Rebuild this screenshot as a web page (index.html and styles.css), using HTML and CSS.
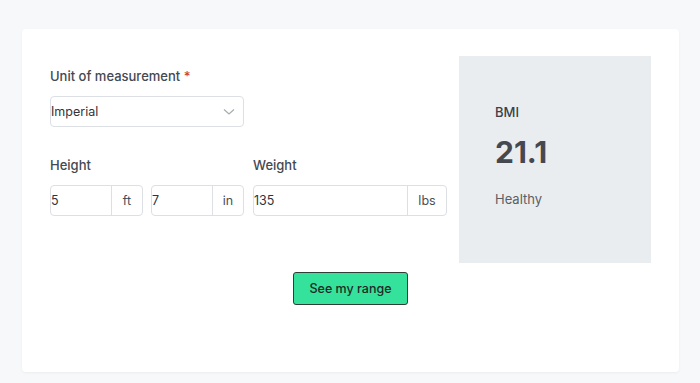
FILE: index.html
```html
<!DOCTYPE html>
<html>
<head>
    <meta charset="UTF-8">
    <meta name="viewport" content="width=device-width, initial-scale=1.0">
    <title>BMI Calculator</title>
    <link rel="stylesheet" href="styles.css">
</head>
<body>
    <div class="card">
        <div class="columns">
            <form class="bmi-form">
                <label class="field-label" for="unit">Unit of measurement <span class="req">*</span></label>
                <div class="select">
                    <span>Imperial</span>
                    <svg width="12" height="8" viewBox="0 0 12 8"><path d="M1 1.5 L6 6 L11 1.5" fill="none" stroke="#a9adb3" stroke-width="1.3"/></svg>
                </div>

                <div class="measure-row">
                    <div class="measure">
                        <div class="field-label">Height</div>
                        <div class="pair">
                            <div class="group"><span class="value">5</span><span class="addon">ft</span></div>
                            <div class="group"><span class="value">7</span><span class="addon">in</span></div>
                        </div>
                    </div>
                    <div class="measure">
                        <div class="field-label">Weight</div>
                        <div class="group"><span class="value">135</span><span class="addon addon-wide">lbs</span></div>
                    </div>
                </div>
            </form>

            <div class="result">
                <div class="result-label">BMI</div>
                <div class="result-value">21.1</div>
                <div class="result-status">Healthy</div>
            </div>
        </div>

        <div class="actions">
            <button type="button">See my range</button>
        </div>
    </div>
</body>
</html>
```

FILE: styles.css
```css
body {
    margin: 0;
    padding: 29px 21px 11px 22px;
    background-color: #f7f8fa;
    font-family: Inter, "Noto Sans", sans-serif;
    color: #3d4350;
}

.card {
    height: 343px;
    box-sizing: border-box;
    padding: 27px 28px 0 28px;
    background-color: #ffffff;
    border-radius: 4px;
    box-shadow: 0 1px 3px rgba(0, 0, 0, 0.05);
}

.columns {
    display: flex;
    gap: 12px;
}

.bmi-form {
    width: 397px;
    padding-top: 11px;
}

.field-label {
    display: block;
    font-size: 13px;
    line-height: 18px;
    font-weight: 500;
    color: #434851;
    margin-bottom: 11px;
}

.req {
    color: #d23c3c;
}

.select {
    width: 194px;
    height: 31px;
    box-sizing: border-box;
    display: flex;
    align-items: center;
    justify-content: space-between;
    padding: 0 8px 0 0;
    border: 1px solid #dcdfe3;
    border-radius: 4px;
    font-size: 12.5px;
    color: #30343a;
}

.measure-row {
    display: flex;
    gap: 9px;
    margin-top: 29px;
}

.measure {
    width: 194px;
}

.pair {
    display: flex;
    gap: 8px;
}

.group {
    flex: 1;
    height: 31px;
    box-sizing: border-box;
    display: flex;
    border: 1px solid #dcdfe3;
    border-radius: 4px;
    font-size: 12.5px;
    color: #30343a;
}

.value {
    flex: 1;
    display: flex;
    align-items: center;
}

.addon {
    width: 30px;
    display: flex;
    align-items: center;
    justify-content: center;
    border-left: 1px solid #dcdfe3;
    color: #4a4f57;
}

.addon-wide {
    width: 38px;
}

.result {
    width: 192px;
    height: 207px;
    box-sizing: border-box;
    padding: 47px 0 0 36px;
    background-color: #eaedf0;
}

.result-label {
    font-size: 13px;
    line-height: 18px;
    font-weight: 500;
    color: #3b4049;
}

.result-value {
    margin-top: 13px;
    font-size: 30px;
    line-height: 36px;
    font-weight: 700;
    color: #45494f;
}

.result-status {
    margin-top: 20px;
    font-size: 13px;
    line-height: 18px;
    color: #5a5f66;
}

.actions {
    display: flex;
    justify-content: center;
    margin-top: 9px;
}

button {
    width: 115px;
    height: 33px;
    background-color: #35e29b;
    border: 1px solid #2f3d37;
    border-radius: 3px;
    font-family: Inter, "Noto Sans", sans-serif;
    font-size: 12.5px;
    font-weight: 500;
    color: #1f2a26;
    cursor: pointer;
}
```
